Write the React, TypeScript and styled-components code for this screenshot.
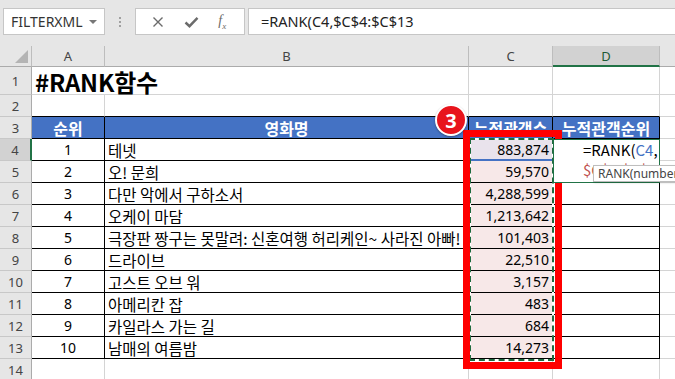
import styled, { createGlobalStyle } from 'styled-components'

const GlobalStyle = createGlobalStyle`
  html, body { margin: 0; padding: 0; background: #ffffff; }
  body { font-family: 'Noto Sans CJK KR', 'Noto Sans', sans-serif; }
`

const movies = [
  { rank: 1, title: '테넷', count: '883,874' },
  { rank: 2, title: '오! 문희', count: '59,570' },
  { rank: 3, title: '다만 악에서 구하소서', count: '4,288,599' },
  { rank: 4, title: '오케이 마담', count: '1,213,642' },
  { rank: 5, title: '극장판 짱구는 못말려: 신혼여행 허리케인~ 사라진 아빠!', count: '101,403' },
  { rank: 6, title: '드라이브', count: '22,510' },
  { rank: 7, title: '고스트 오브 워', count: '3,157' },
  { rank: 8, title: '아메리칸 잡', count: '483' },
  { rank: 9, title: '카일라스 가는 길', count: '684' },
  { rank: 10, title: '남매의 여름밤', count: '14,273' },
]

export default function App() {
  return (
    <>
      <GlobalStyle />
      <Page>
        <FormulaBar>
          <NameBox>
            FILTERXML
            <Caret />
          </NameBox>
          <Grip>
            <i />
            <i />
            <i />
          </Grip>
          <FxBox>
            <svg width="12" height="12" viewBox="0 0 12 12">
              <path d="M1.5 1.5 L10.5 10.5 M10.5 1.5 L1.5 10.5" stroke="#6b6b6b" strokeWidth="1.4" fill="none" />
            </svg>
            <svg width="15" height="12" viewBox="0 0 15 12">
              <path d="M1.5 6.5 L5.5 10.2 L13.5 1.8" stroke="#6b6b6b" strokeWidth="2.4" fill="none" />
            </svg>
            <Fx>
              f<sub>x</sub>
            </Fx>
          </FxBox>
          <FormulaInput>=RANK(C4,$C$4:$C$13</FormulaInput>
        </FormulaBar>

        <Sheet>
          <Corner />
          <ColHead>A</ColHead>
          <ColHead>B</ColHead>
          <ColHead>C</ColHead>
          <ColHead $active>D</ColHead>
          <ColHead $last />

          <RowHead>1</RowHead>
          <Title>#RANK함수</Title>
          <Cell />
          <Cell />
          <Cell $last />

          <RowHead>2</RowHead>
          <Cell $bottom="#000" />
          <Cell $bottom="#000" />
          <Cell $bottom="#000" />
          <Cell $bottom="#000" />
          <Cell $last />

          <RowHead>3</RowHead>
          <HeadCell>순위</HeadCell>
          <HeadCell>영화명</HeadCell>
          <HeadCell>누적관객수</HeadCell>
          <HeadCell>누적관객순위</HeadCell>
          <Cell $last />

          {movies.map((m, i) => (
            <Row key={m.rank} m={m} first={i === 0} />
          ))}

          <RowHead>14</RowHead>
          <Cell />
          <Cell />
          <Cell />
          <Cell />
          <Cell $last />
        </Sheet>

        <Marquee />
        <RedFrame />
        <Badge>3</Badge>
        <Editor>
          <EditLine>
            =RANK(<Ref $color="#4472c4">C4</Ref>,
          </EditLine>
          <EditLine>
            <Ref $color="#c0504d">$C$4:$C$13</Ref>
          </EditLine>
        </Editor>
        <Tip>RANK(number, ref, [order])</Tip>
      </Page>
    </>
  )
}

const Row = ({ m, first }: { m: (typeof movies)[number]; first: boolean }) => (
  <>
    <RowHead $active={first}>{m.rank + 3}</RowHead>
    <DataCell $align="center" $num>
      {m.rank}
    </DataCell>
    <DataCell>{m.title}</DataCell>
    <DataCell $align="flex-end" $num $fill={first ? '#e9e3ec' : '#f7e8e8'} $ref={first}>
      {m.count}
    </DataCell>
    <DataCell />
    <Cell $last />
  </>
)

const Page = styled.div`
  position: relative;
  width: 675px;
  height: 379px;
  overflow: hidden;
  background: #ffffff;
`

const FormulaBar = styled.div`
  display: flex;
  align-items: flex-start;
  height: 46px;
  box-sizing: border-box;
  padding: 8px 0 0 3px;
  background: #e6e6e6;
`

const NameBox = styled.div`
  position: relative;
  width: 102px;
  height: 27px;
  box-sizing: border-box;
  border: 1px solid #c6c6c6;
  background: #ffffff;
  padding-left: 7px;
  font-family: 'Noto Sans', sans-serif;
  font-size: 14px;
  line-height: 25px;
  color: #333;
`

const Caret = styled.span`
  position: absolute;
  right: 7px;
  top: 11px;
  border-left: 4px solid transparent;
  border-right: 4px solid transparent;
  border-top: 4px solid #777;
`

const Grip = styled.div`
  width: 30px;
  height: 27px;
  display: flex;
  flex-direction: column;
  align-items: center;
  justify-content: center;
  gap: 2px;

  i {
    width: 2px;
    height: 2px;
    background: #a0a0a0;
  }
`

const FxBox = styled.div`
  width: 110px;
  height: 27px;
  box-sizing: border-box;
  border: 1px solid #c6c6c6;
  background: #ffffff;
  display: flex;
  align-items: center;
  justify-content: space-around;
  padding: 0 8px 0 6px;
`

const Fx = styled.span`
  font-family: 'Liberation Serif', serif;
  font-style: italic;
  font-size: 14px;
  color: #6b6b6b;

  sub {
    font-size: 9px;
  }
`

const FormulaInput = styled.div`
  flex: 1;
  height: 27px;
  margin-left: 3px;
  box-sizing: border-box;
  border: 1px solid #c6c6c6;
  border-right: none;
  background: #ffffff;
  padding-left: 12px;
  font-family: 'Noto Sans', sans-serif;
  font-size: 14.5px;
  line-height: 25px;
  color: #222;
`

const Sheet = styled.div`
  display: grid;
  grid-template-columns: 32px 73px 364px 84px 107px 15px;
  grid-template-rows: 21px 28px 22px 22px repeat(11, 22px);
  font-size: 15.5px;
  color: #000;
`

const Corner = styled.div`
  position: relative;
  background: #e6e6e6;
  border-right: 1px solid #bdbdbd;
  border-bottom: 1px solid #ababab;

  &::after {
    content: '';
    position: absolute;
    right: 3px;
    bottom: 3px;
    border-left: 13px solid transparent;
    border-bottom: 13px solid #b4b4b4;
  }
`

const ColHead = styled.div<{ $active?: boolean; $last?: boolean }>`
  display: flex;
  align-items: center;
  justify-content: center;
  background: ${(p) => (p.$active ? '#d2d2d2' : '#e6e6e6')};
  border-right: ${(p) => (p.$last ? 'none' : '1px solid #bdbdbd')};
  border-bottom: ${(p) => (p.$active ? '2px solid #217346' : '1px solid #ababab')};
  font-family: 'Noto Sans', sans-serif;
  font-size: 13px;
  color: ${(p) => (p.$active ? '#1e5a35' : '#444')};
`

const RowHead = styled.div<{ $active?: boolean }>`
  display: flex;
  align-items: center;
  justify-content: center;
  background: ${(p) => (p.$active ? '#d2d2d2' : '#e6e6e6')};
  border-bottom: 1px solid #c8c8c8;
  border-right: ${(p) => (p.$active ? '2px solid #217346' : '1px solid #ababab')};
  font-family: 'Noto Sans', sans-serif;
  font-size: 13px;
  color: #444;
`

const Cell = styled.div<{ $bottom?: string; $last?: boolean }>`
  border-right: ${(p) => (p.$last ? 'none' : '1px solid #d4d4d4')};
  border-bottom: 1px solid ${(p) => p.$bottom ?? '#d4d4d4'};
`

const Title = styled.div`
  grid-column: span 2;
  display: flex;
  align-items: center;
  padding: 2px 0 0 3px;
  border-right: 1px solid #d4d4d4;
  border-bottom: 1px solid #d4d4d4;
  font-size: 24px;
  font-weight: 700;
  letter-spacing: -0.2px;
`

const HeadCell = styled.div`
  display: flex;
  align-items: center;
  justify-content: center;
  background: #4472c4;
  color: #ffffff;
  font-size: 16px;
  font-weight: 700;
  white-space: nowrap;
  overflow: hidden;
  border-right: 1px solid #000;
  border-bottom: 1px solid #000;
`

const DataCell = styled.div<{ $align?: string; $fill?: string; $ref?: boolean; $num?: boolean }>`
  display: flex;
  align-items: center;
  justify-content: ${(p) => p.$align ?? 'flex-start'};
  padding: 0 3px;
  white-space: nowrap;
  font-family: ${(p) => (p.$num ? "'Noto Sans', sans-serif" : "'Noto Sans CJK KR', sans-serif")};
  font-size: ${(p) => (p.$num ? '14px' : '15.5px')};
  background: ${(p) => p.$fill ?? '#ffffff'};
  border-right: 1px solid #000;
  border-bottom: ${(p) => (p.$ref ? '2px solid #4472c4' : '1px solid #000')};
`

const Marquee = styled.div`
  position: absolute;
  left: 469px;
  top: 138px;
  width: 85px;
  height: 223px;
  box-sizing: border-box;
  border: 2px solid #ffffff;

  &::after {
    content: '';
    position: absolute;
    inset: -2px;
    border: 2px dashed #1f6b3f;
  }
`

const RedFrame = styled.div`
  position: absolute;
  left: 463px;
  top: 130px;
  width: 99px;
  height: 239px;
  box-sizing: border-box;
  border: 7px solid #ff0000;
`

const Badge = styled.div`
  position: absolute;
  left: 435px;
  top: 104px;
  width: 32px;
  height: 32px;
  box-sizing: border-box;
  border-radius: 50%;
  border: 2px solid #ffffff;
  background: #e8141c;
  box-shadow: 0 1px 2px rgba(0, 0, 0, 0.35);
  display: flex;
  align-items: center;
  justify-content: center;
  color: #ffffff;
  font-family: 'Noto Sans', sans-serif;
  font-size: 20px;
  font-weight: 700;
`

const Editor = styled.div`
  position: absolute;
  left: 553px;
  top: 139px;
  width: 107px;
  height: 44px;
  box-sizing: border-box;
  border: 1px solid #217346;
  background: #ffffff;
  padding: 0 0 0 29px;
  font-size: 15px;
  line-height: 20px;
  white-space: nowrap;
  overflow: hidden;
`

const EditLine = styled.div`
  color: #000;
`

const Ref = styled.span<{ $color: string }>`
  color: ${(p) => p.$color};
`

const Tip = styled.div`
  position: absolute;
  left: 593px;
  top: 165px;
  height: 17px;
  box-sizing: border-box;
  padding: 0 4px;
  border: 1px solid #bebebe;
  background: #ffffff;
  box-shadow: 1px 1px 2px rgba(0, 0, 0, 0.15);
  font-family: 'Noto Sans', sans-serif;
  font-size: 12px;
  line-height: 15px;
  color: #444;
  white-space: nowrap;
`
